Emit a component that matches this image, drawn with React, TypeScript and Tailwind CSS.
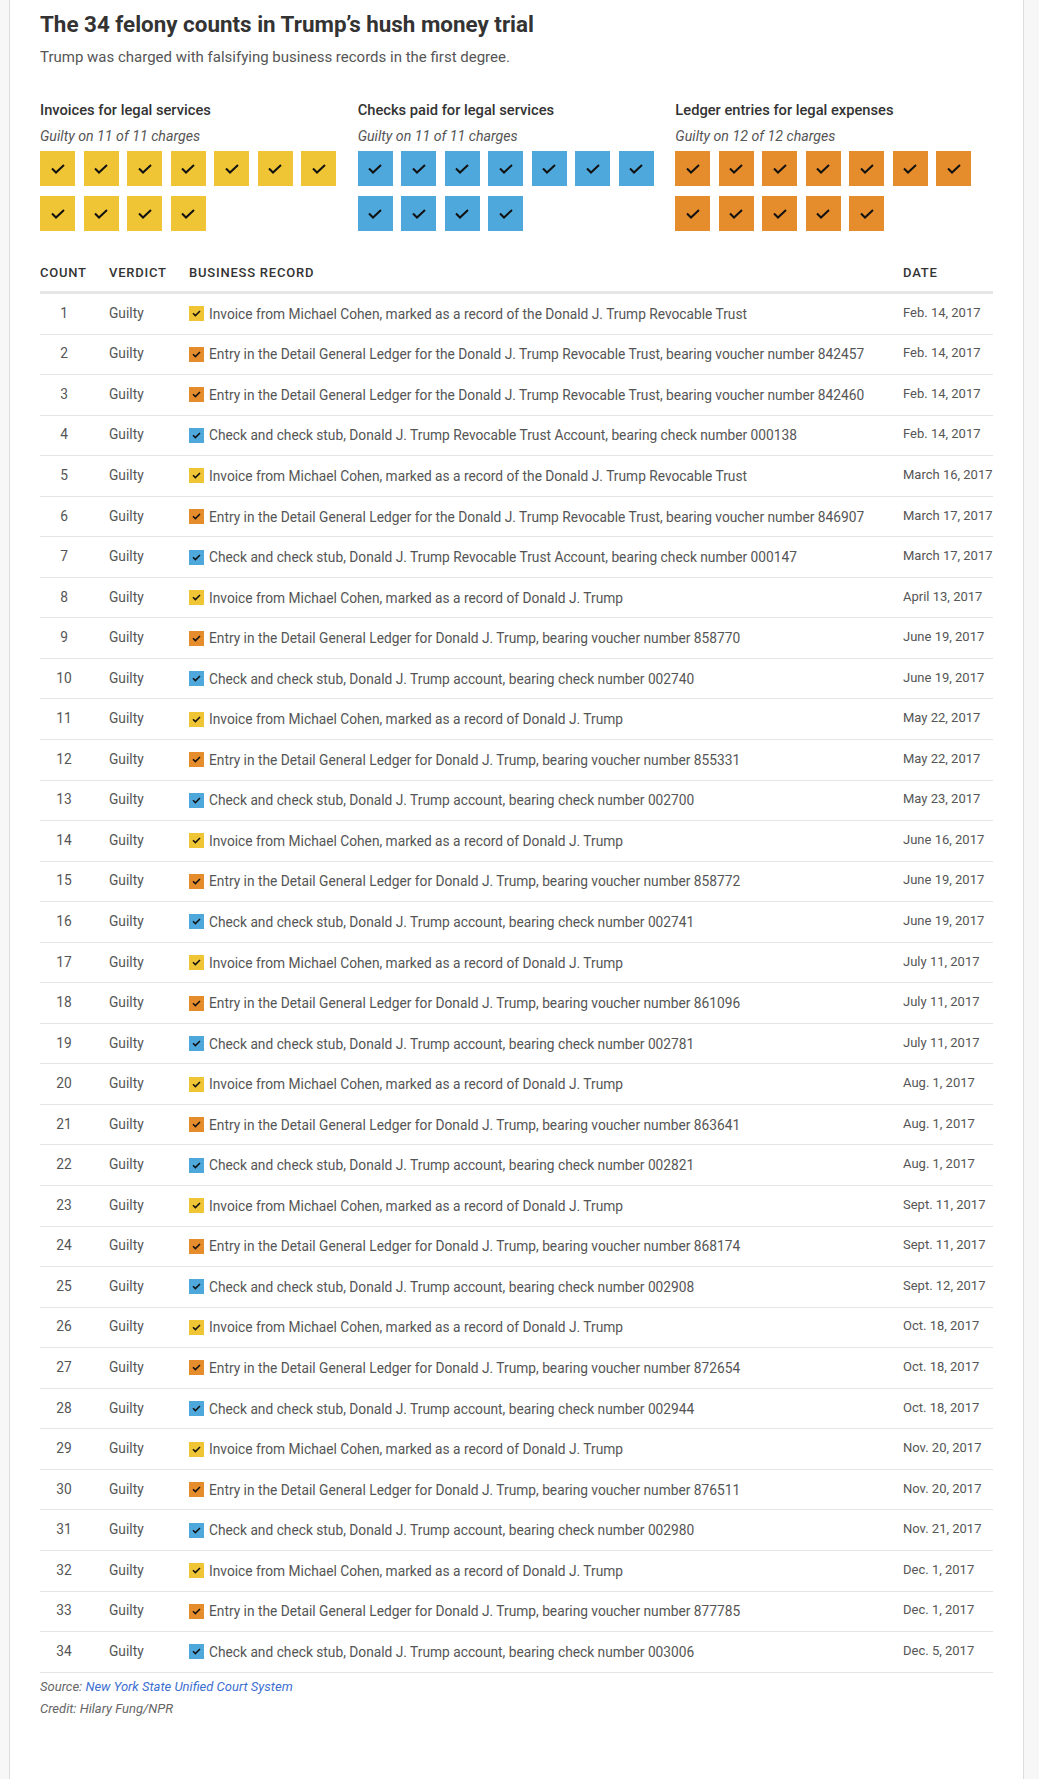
import React from 'react'

type Kind = 'invoice' | 'check' | 'ledger'

const colors: Record<Kind, string> = {
  invoice: 'bg-[#efc536]',
  check: 'bg-[#4fa8dc]',
  ledger: 'bg-[#e58c2c]',
}

const invoice = (who: string) => `Invoice from Michael Cohen, marked as a record of ${who}`
const ledger = (who: string, n: string) =>
  `Entry in the Detail General Ledger for ${who}, bearing voucher number ${n}`
const check = (acct: string, n: string) =>
  `Check and check stub, ${acct}, bearing check number ${n}`

const DJT = 'Donald J. Trump'
const TRUST = 'the Donald J. Trump Revocable Trust'

const rows: { kind: Kind; text: string; date: string }[] = [
  { kind: 'invoice', text: invoice(TRUST), date: 'Feb. 14, 2017' },
  { kind: 'ledger', text: ledger(TRUST, '842457'), date: 'Feb. 14, 2017' },
  { kind: 'ledger', text: ledger(TRUST, '842460'), date: 'Feb. 14, 2017' },
  { kind: 'check', text: check('Donald J. Trump Revocable Trust Account', '000138'), date: 'Feb. 14, 2017' },
  { kind: 'invoice', text: invoice(TRUST), date: 'March 16, 2017' },
  { kind: 'ledger', text: ledger(TRUST, '846907'), date: 'March 17, 2017' },
  { kind: 'check', text: check('Donald J. Trump Revocable Trust Account', '000147'), date: 'March 17, 2017' },
  { kind: 'invoice', text: invoice(DJT), date: 'April 13, 2017' },
  { kind: 'ledger', text: ledger(DJT, '858770'), date: 'June 19, 2017' },
  { kind: 'check', text: check('Donald J. Trump account', '002740'), date: 'June 19, 2017' },
  { kind: 'invoice', text: invoice(DJT), date: 'May 22, 2017' },
  { kind: 'ledger', text: ledger(DJT, '855331'), date: 'May 22, 2017' },
  { kind: 'check', text: check('Donald J. Trump account', '002700'), date: 'May 23, 2017' },
  { kind: 'invoice', text: invoice(DJT), date: 'June 16, 2017' },
  { kind: 'ledger', text: ledger(DJT, '858772'), date: 'June 19, 2017' },
  { kind: 'check', text: check('Donald J. Trump account', '002741'), date: 'June 19, 2017' },
  { kind: 'invoice', text: invoice(DJT), date: 'July 11, 2017' },
  { kind: 'ledger', text: ledger(DJT, '861096'), date: 'July 11, 2017' },
  { kind: 'check', text: check('Donald J. Trump account', '002781'), date: 'July 11, 2017' },
  { kind: 'invoice', text: invoice(DJT), date: 'Aug. 1, 2017' },
  { kind: 'ledger', text: ledger(DJT, '863641'), date: 'Aug. 1, 2017' },
  { kind: 'check', text: check('Donald J. Trump account', '002821'), date: 'Aug. 1, 2017' },
  { kind: 'invoice', text: invoice(DJT), date: 'Sept. 11, 2017' },
  { kind: 'ledger', text: ledger(DJT, '868174'), date: 'Sept. 11, 2017' },
  { kind: 'check', text: check('Donald J. Trump account', '002908'), date: 'Sept. 12, 2017' },
  { kind: 'invoice', text: invoice(DJT), date: 'Oct. 18, 2017' },
  { kind: 'ledger', text: ledger(DJT, '872654'), date: 'Oct. 18, 2017' },
  { kind: 'check', text: check('Donald J. Trump account', '002944'), date: 'Oct. 18, 2017' },
  { kind: 'invoice', text: invoice(DJT), date: 'Nov. 20, 2017' },
  { kind: 'ledger', text: ledger(DJT, '876511'), date: 'Nov. 20, 2017' },
  { kind: 'check', text: check('Donald J. Trump account', '002980'), date: 'Nov. 21, 2017' },
  { kind: 'invoice', text: invoice(DJT), date: 'Dec. 1, 2017' },
  { kind: 'ledger', text: ledger(DJT, '877785'), date: 'Dec. 1, 2017' },
  { kind: 'check', text: check('Donald J. Trump account', '003006'), date: 'Dec. 5, 2017' },
]

const groups: { kind: Kind; title: string; count: number }[] = [
  { kind: 'invoice', title: 'Invoices for legal services', count: 11 },
  { kind: 'check', title: 'Checks paid for legal services', count: 11 },
  { kind: 'ledger', title: 'Ledger entries for legal expenses', count: 12 },
]

const Check = ({ small }: { small?: boolean }) =>
  small ? (
    <svg width="9" height="7" viewBox="0 0 9 7" fill="none">
      <polyline points="1,3.2 3.4,5.6 8,1" stroke="#111" strokeWidth="1.5" />
    </svg>
  ) : (
    <svg width="14" height="10" viewBox="0 0 14 10" fill="none">
      <polyline points="1,4.5 5,8.5 13,1" stroke="#111" strokeWidth="2" />
    </svg>
  )

const App = () => {
  return (
    <div className="min-h-[1779px] bg-[#f7f7f7] font-['Roboto',sans-serif]">
      <div className="ml-[9px] min-h-[1779px] w-[1015px] border-x border-[#dcdcdc] bg-white px-[30px] pt-[9px]">
        <h1 className="text-[22.4px] font-bold leading-[30px] text-[#333]">
          The 34 felony counts in Trump’s hush money trial
        </h1>
        <p className="mt-[7px] text-[15px] leading-[22px] text-[#555]">
          Trump was charged with falsifying business records in the first degree.
        </p>

        <div className="mt-[31px] grid grid-cols-3">
          {groups.map((g) => (
            <div key={g.kind}>
              <h2 className="text-[14.7px] font-medium leading-[22px] text-[#333]">{g.title}</h2>
              <p className="mt-[5px] text-[14.2px] italic leading-[20px] text-[#555]">
                Guilty on {g.count} of {g.count} charges
              </p>
              <div className="mt-[5px] flex w-[305px] flex-wrap gap-x-[8.5px] gap-y-[10px]">
                {Array.from({ length: g.count }).map((_, i) => (
                  <div
                    key={i}
                    className={`flex h-[35px] w-[35px] items-center justify-center pt-[1px] ${colors[g.kind]}`}
                  >
                    <Check />
                  </div>
                ))}
              </div>
            </div>
          ))}
        </div>

        <div className="mt-[27px]">
          <div className="grid h-[36px] grid-cols-[69px_80px_714px_1fr] border-b-[3px] border-[#e6e6e6] pt-[5px] text-[13px] font-medium uppercase leading-[20px] tracking-[0.06em] text-[#333]">
            <div>Count</div>
            <div>Verdict</div>
            <div>Business record</div>
            <div>Date</div>
          </div>
          {rows.map((r, i) => (
            <div
              key={i}
              className="grid h-[40.56px] grid-cols-[69px_80px_714px_1fr] items-center border-b border-[#e6e6e6] text-[13.75px] leading-[20px] text-[#555]"
            >
              <div className="mt-[-2px] w-[48px] text-center">{i + 1}</div>
              <div className="mt-[-2px]">Guilty</div>
              <div className="flex items-center gap-[5px]">
                <span className={`flex h-[15px] w-[15px] shrink-0 items-center justify-center ${colors[r.kind]}`}>
                  <Check small />
                </span>
                <span>{r.text}</span>
              </div>
              <div className="mt-[-2px] whitespace-nowrap text-[13px]">{r.date}</div>
            </div>
          ))}
        </div>

        <div className="mt-[3px] text-[13px] italic leading-[22px] text-[#666]">
          <p>
            Source:{' '}
            <a href="#" className="text-[#3c6fd1]">
              New York State Unified Court System
            </a>
          </p>
          <p>Credit: Hilary Fung/NPR</p>
        </div>
      </div>
    </div>
  )
}

export default App
